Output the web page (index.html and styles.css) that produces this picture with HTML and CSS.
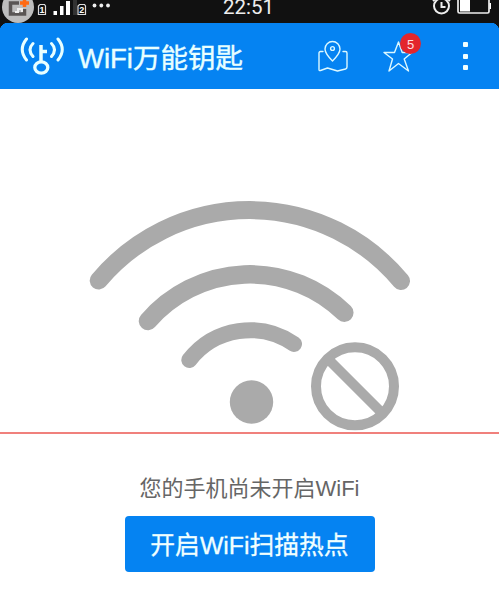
FILE: index.html
```html
<!DOCTYPE html>
<html lang="zh-CN">
<head>
    <meta charset="UTF-8">
    <meta name="viewport" content="width=device-width, initial-scale=1.0">
    <title>WiFi万能钥匙</title>
    <link rel="stylesheet" href="styles.css">
</head>
<body>
    <div class="status">
        <svg width="120" height="23" viewBox="0 0 120 23">
            <circle cx="18" cy="7" r="16" fill="#bdbdbd"/>
            <path d="M19 3h-8.500v11h14V9" fill="none" stroke="#595554" stroke-width="3.500"/>
            <path d="M15 12h3V9h4v3" fill="none" stroke="#eee" stroke-width="2"/>
            <path d="M20 3h9M24.500-1v8" stroke="#ff6a13" stroke-width="3.500"/>
            <path d="M40 4.500h4.500l1 1.500v8.500h-7V6z" fill="none" stroke="#ddd" stroke-width="1.200"/>
            <path d="M53.500 11h3.500v4h-3.500zM60 6h3.500v9h-3.500zM66 1h4v14h-4z" fill="#fff"/>
            <path d="M73 0h4v15h-4z" fill="#333"/>
            <path d="M79.500 4.500h5l1 1.500v8.500h-7.500V6z" fill="none" stroke="#ddd" stroke-width="1.200"/>
            <g class="sim">
                <text x="42" y="13">1</text>
                <text x="81.800" y="13">2</text>
            </g>
            <g fill="#eee">
                <circle cx="94.500" cy="5.500" r="1.900"/>
                <circle cx="101.300" cy="5.500" r="1.900"/>
                <circle cx="108" cy="5.500" r="1.900"/>
            </g>
        </svg>
        <span class="time">22:51</span>
        <svg width="70" height="23" viewBox="0 0 70 23">
            <g fill="none" stroke="#eee" stroke-width="2">
                <circle cx="12.500" cy="6" r="7.500"/>
                <path d="M12.500 2v5h4M4 1l3-2.500M21 1l-3-2.500"/>
                <path d="M29 0v11.500q0 1.500 1.500 1.500h28q1.500 0 1.500-1.500V0" stroke-width="1.700"/>
            </g>
            <path d="M31 0h10v11.500H31zM60.500 3h1.500v6h-1.500z" fill="#fff"/>
        </svg>
    </div>

    <header class="header">
        <svg class="logo" width="44" height="40" viewBox="0 0 44 40">
            <g fill="none" stroke="#e8ffff" stroke-width="3" stroke-linecap="round">
                <path d="M6.500 3Q-2 13.500 6.500 24M13 7.500Q7 13.500 13 20.500M31.500 7.500Q37.500 13.500 31.500 20.500M38 3Q46.500 13.500 38 24"/>
                <path d="M21 9v17M21 15.500h6" stroke-linecap="butt" stroke-width="3.500"/>
                <ellipse cx="21.300" cy="31.500" rx="6.500" ry="5.700" stroke-width="3.300"/>
            </g>
        </svg>
        <h1 class="title">WiFi万能钥匙</h1>
        <svg class="map" width="30" height="32" viewBox="0 0 30 32">
            <g fill="none" stroke="#dcf8ff" stroke-width="1.400" stroke-linejoin="round" stroke-linecap="round">
                <path d="M5 11.500H2.500Q1 11.500 1 13v16.500q0 1.500 1.500 1l7-2.500 10 3 8-2q1.500-.5 1.500-2V13q0-1.500-1.500-1.500H25"/>
                <path d="M14.500 21Q7 13.500 7 9a7.500 7.500 0 0 1 15 0q0 4.500-7.500 12z"/>
                <circle cx="14.500" cy="8.500" r="1.900"/>
            </g>
        </svg>
        <div class="favorite">
            <svg width="30" height="31" viewBox="0 0 30 31">
                <path d="M15.500 1l3.700 10.500H29L21.200 18l4.300 12-10-7.500L6 30l3.500-12L1 11.500h10.500z" fill="none" stroke="#dcf8ff" stroke-width="1.400" stroke-linejoin="round"/>
            </svg>
            <span class="badge">5</span>
        </div>
        <div class="menu">
            <i></i>
            <i></i>
            <i></i>
        </div>
    </header>

    <main class="content">
        <svg class="wifi" width="499" height="343" viewBox="0 89 499 343">
            <g fill="none" stroke="#aaa" stroke-linecap="round">
                <path d="M98.700 280.500A197 197 0 0 1 401 281" stroke-width="18"/>
                <path d="M148 321A135 135 0 0 1 344.300 312.700" stroke-width="18.500"/>
                <path d="M189.300 360A77 77 0 0 1 294 344" stroke-width="16"/>
                <circle cx="355" cy="386.300" r="39" stroke-width="10"/>
                <path d="M329 360l52 52" stroke-width="10" stroke-linecap="butt"/>
            </g>
            <circle cx="251.500" cy="402" r="21.700" fill="#aaa"/>
        </svg>
        <div class="line"></div>
        <p class="message">您的手机尚未开启WiFi</p>
        <button class="scan">开启WiFi扫描热点</button>
    </main>
</body>
</html>
```
FILE: styles.css
```css
body {
    margin: 0;
    height: 595px;
    overflow: hidden;
    background: #fff;
    font-family: 'Liberation Sans', 'Noto Sans CJK SC', sans-serif;
}

.status {
    display: grid;
    grid-template-columns: 120px 1fr 70px;
    height: 23px;
    background: #111;
}

.sim {
    font-size: 9px;
    font-weight: bold;
    fill: #fff;
    text-anchor: middle;
}

.time {
    padding-right: 52px;
    font-family: Roboto, sans-serif;
    font-size: 20.5px;
    line-height: 14px;
    text-align: center;
    color: #eee;
}

.header {
    display: flex;
    align-items: flex-start;
    box-sizing: border-box;
    height: 66px;
    padding-left: 20px;
    background: radial-gradient(circle at 8px 8px, #0583f2 8px, #111 8.5px) 0 0 / 8px 8px no-repeat,
        radial-gradient(circle at 0 8px, #0583f2 8px, #111 8.5px) 100% 0 / 8px 8px no-repeat,
        #0583f2;
}

.logo {
    margin-top: 13px;
}

.title {
    width: 170px;
    margin: 16px 0 0 14px;
    font-size: 27.5px;
    font-weight: normal;
    line-height: 40px;
    white-space: nowrap;
    color: #e8ffff;
    -webkit-text-stroke: 0.4px #e8ffff;
}

.map {
    margin: 17px 0 0 70px;
}

.favorite {
    position: relative;
    height: 31px;
    margin: 18px 0 0 35px;
}

.badge {
    position: absolute;
    left: 17px;
    top: -8px;
    width: 21px;
    height: 21px;
    border-radius: 50%;
    background: #e3262d;
    color: #ffe0e0;
    font-size: 13px;
    line-height: 23px;
    text-align: center;
}

.menu {
    display: flex;
    flex-direction: column;
    gap: 6.5px;
    margin: 19px 0 0 50px;
}

.menu i {
    width: 5px;
    height: 5px;
    background: #f2ffff;
    border-radius: 1px;
}

.content {
    display: flex;
    flex-direction: column;
    align-items: center;
}

.wifi {
    display: block;
}

.line {
    width: 100%;
    height: 2px;
    background: #f0807c;
}

.message {
    margin: 39px 0 0;
    font-size: 22px;
    line-height: 32px;
    color: #666;
}

.scan {
    width: 250px;
    height: 56px;
    margin-top: 11px;
    padding: 4px 0 0;
    border: 0;
    border-radius: 4px;
    background: #0583f2;
    color: #f0ffff;
    font-family: inherit;
    font-size: 24.8px;
    line-height: 52px;
    -webkit-text-stroke: 0.3px #f0ffff;
}
```
